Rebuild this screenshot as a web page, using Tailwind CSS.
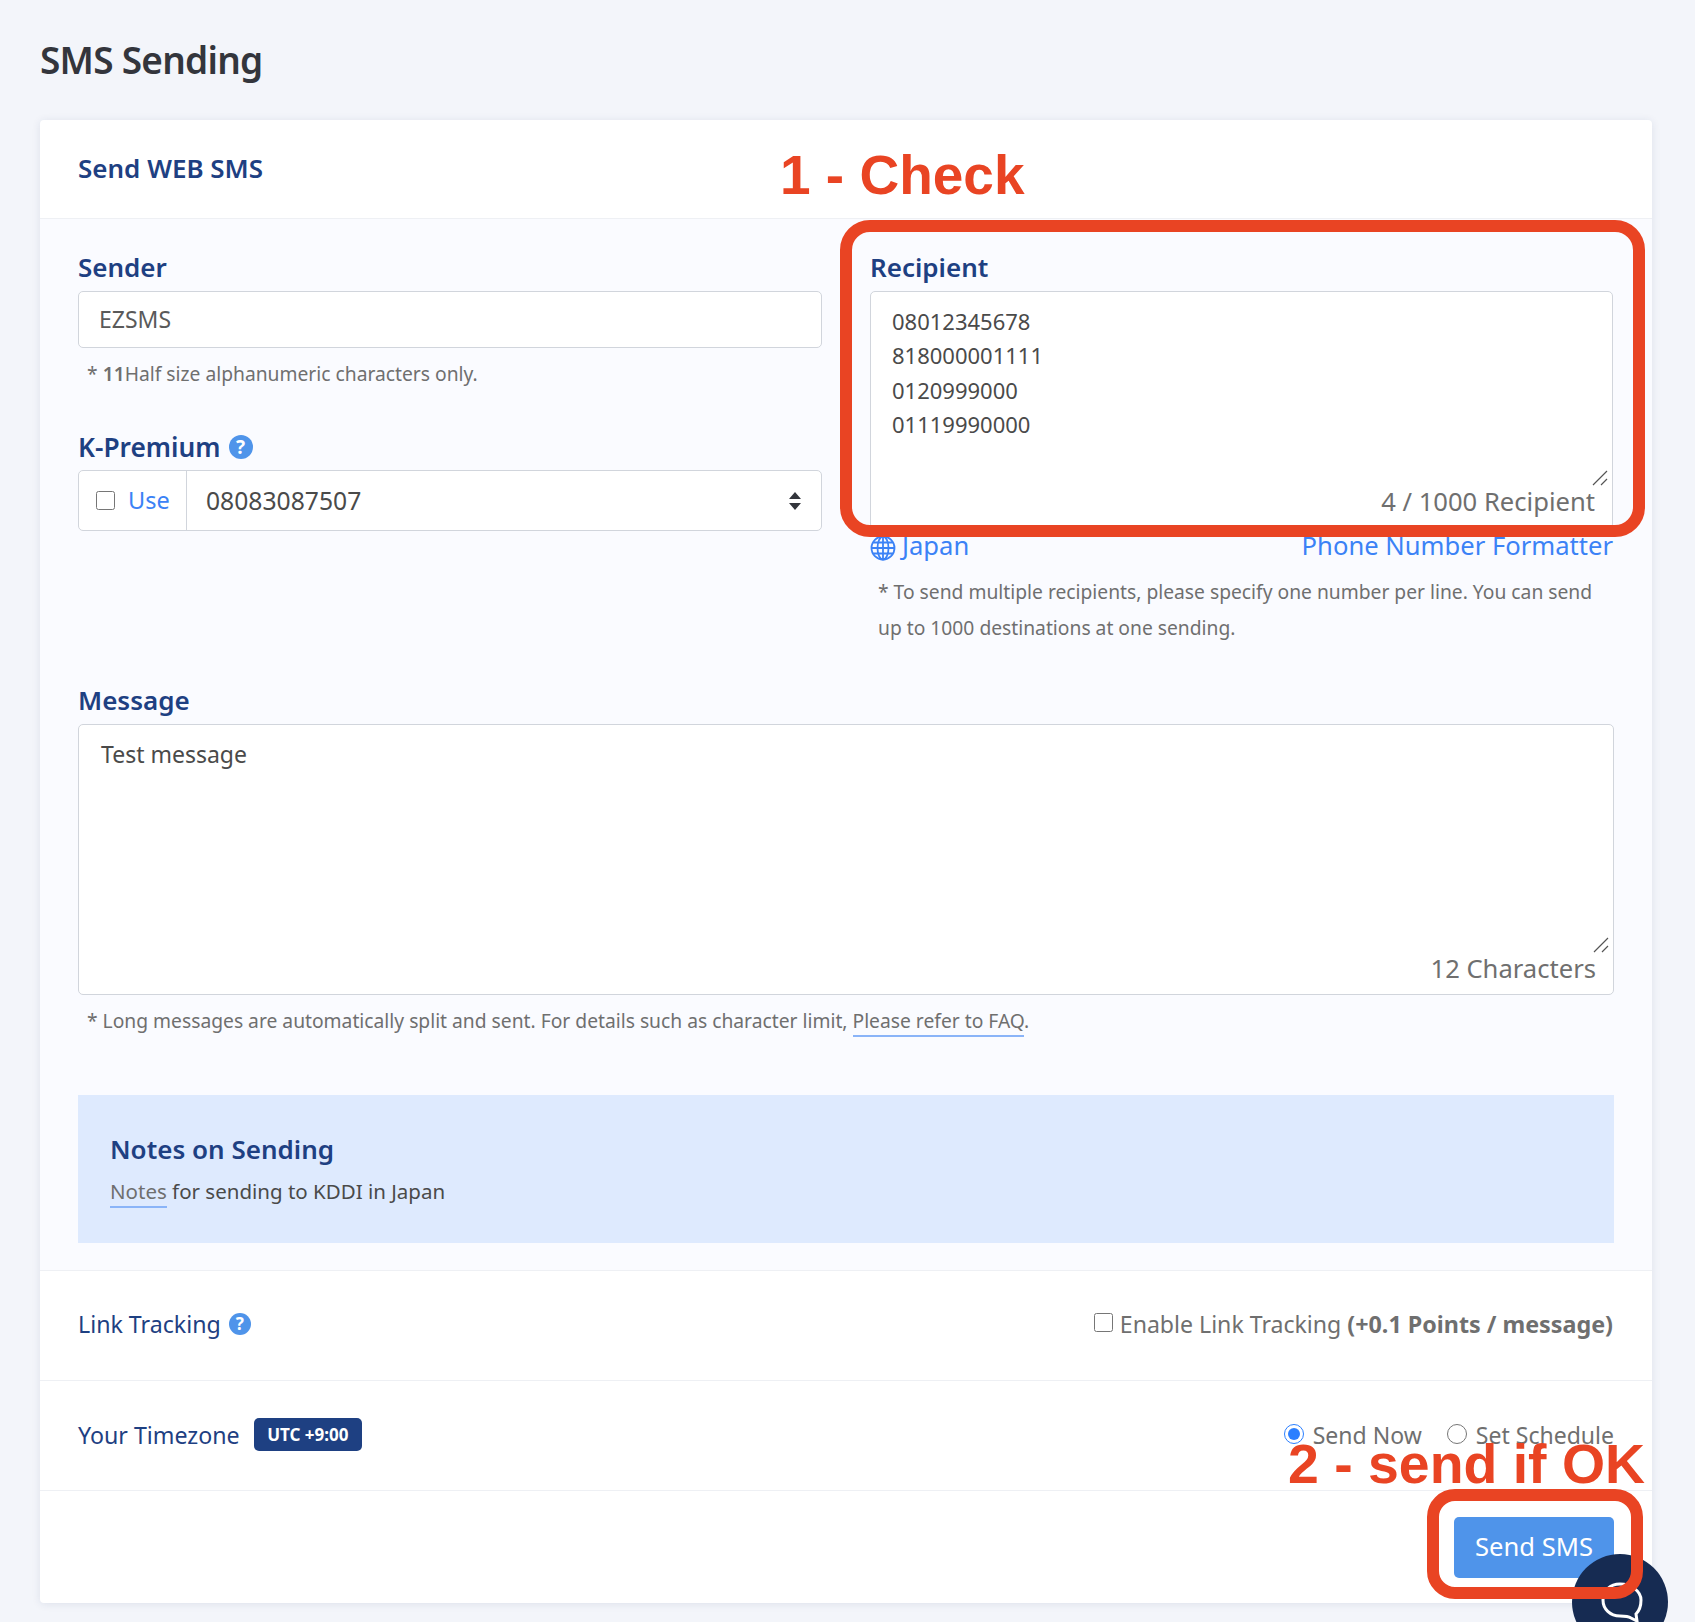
<!DOCTYPE html>
<html lang="en">
<head>
  <meta charset="UTF-8">
  <title>SMS Sending</title>
  <script src="https://cdn.jsdelivr.net/npm/@tailwindcss/browser@4"></script>
</head>
<body class="bg-[#f3f5fa] font-['Noto_Sans',sans-serif] text-[#4a4a4a]">
<div class="relative h-[1622px] overflow-hidden pl-[40px] pr-[43px]">
  <!-- Title -->
  <div class="h-[120px] flex items-center">
    <h1 class="text-[37px] font-semibold tracking-[-0.75px] text-[#33353c]">SMS Sending</h1>
  </div>

  <!-- Card -->
  <div class="bg-white rounded-[4px] shadow-[0_1px_8px_rgba(30,50,100,0.10)] h-[1483px]">
    <div class="h-[99px] px-[38px] flex items-center border-b border-[#eef0f4]">
      <h2 class="text-[26px] font-semibold text-[#1e4082] mt-[-1px]">Send WEB SMS</h2>
    </div>

    <div class="bg-[#fafbff] h-[1052px] px-[38px] border-b border-[#eef0f4]">
      <div class="grid grid-cols-[744px_743px] gap-x-[48px]">
        <!-- Left column -->
        <div class="pt-[32px]">
          <label class="block h-[33px] leading-[32px] text-[26px] font-semibold text-[#1e4082]">Sender</label>
          <div class="mt-[7px] h-[57px] flex items-center px-[20px] bg-white border border-gray-300 rounded-[5px] text-[23px] text-[#5a5a5a]">EZSMS</div>
          <p class="mt-[12px] pl-[9px] h-[28px] leading-[28px] text-[19.25px] text-[#6f6f6f]">* <b class="font-semibold">11</b>Half size alphanumeric characters only.</p>
          <div class="mt-[42px] h-[33px] flex items-center gap-[8px]">
            <label class="text-[26.3px] leading-[34px] font-semibold text-[#1e4082]">K-Premium</label>
            <span class="w-[24px] h-[24px] rounded-full bg-[#4f94ea] text-white text-[19px] leading-[24px] font-bold text-center">?</span>
          </div>
          <div class="mt-[7px] h-[61px] flex bg-white border border-gray-300 rounded-[5px]">
            <div class="w-[108px] flex items-center pl-[17px] gap-[13px] border-r border-gray-300">
              <input type="checkbox" class="w-[19px] h-[19px] m-0">
              <span class="text-[23.5px] text-[#3b82f6]">Use</span>
            </div>
            <div class="flex-1 flex items-center justify-between pl-[19px] pr-[20px] text-[24.7px]">
              <span>08083087507</span>
              <svg class="w-[12px] h-[18px]" viewBox="0 0 12 18" fill="#33353c"><path d="M6 0l6 7H0zM6 18L0 11h12z"/></svg>
            </div>
          </div>
        </div>

        <!-- Right column -->
        <div class="pt-[32px]">
          <label class="block h-[33px] leading-[32px] text-[26px] font-semibold text-[#1e4082]">Recipient</label>
          <div class="relative mt-[7px] h-[238px] pt-[12px] px-[21px] bg-white border border-gray-300 rounded-[5px] text-[22px] leading-[34.4px]">
            <div>08012345678</div>
            <div>818000001111</div>
            <div>0120999000</div>
            <div>01119990000</div>
            <svg class="absolute right-[4px] top-[178px] w-[16px] h-[16px]" viewBox="0 0 16 16" fill="none" stroke="#555" stroke-width="1.2"><path d="M1 15L15 1M9 15l6-6"/></svg>
            <span class="absolute right-[17px] top-[192px] text-[25.6px] leading-[36px] text-[#6f6f6f]">4 / 1000 Recipient</span>
          </div>
          <div class="h-[34px] flex items-center justify-between text-[25.6px] leading-[34px] text-[#3b82f6]">
            <span class="flex items-center gap-[6px]">
              <svg class="w-[26px] h-[26px] mt-[3px]" viewBox="0 0 26 26" fill="none" stroke="#3b82f6" stroke-width="1.8"><circle cx="13" cy="13" r="11.5"/><ellipse cx="13" cy="13" rx="5.5" ry="11.5"/><path d="M13 1.5v23M1.5 13h23M3.2 7.5h19.6M3.2 18.5h19.6"/></svg>
              Japan
            </span>
            <span>Phone Number Formatter</span>
          </div>
          <p class="mt-[11px] pl-[8px] pr-[10px] text-[19.25px] leading-[36px] text-[#6f6f6f]">* To send multiple recipients, please specify one number per line. You can send up to 1000 destinations at one sending.</p>
        </div>
      </div>

      <!-- Message -->
      <label class="block mt-[38px] h-[33px] leading-[32px] text-[26px] font-semibold text-[#1e4082]">Message</label>
      <div class="relative mt-[7px] h-[271px] pt-[12px] pl-[22px] pr-[21px] bg-white border border-gray-300 rounded-[5px] text-[23px] leading-[34px]">
        Test message
        <svg class="absolute right-[4px] top-[212px] w-[16px] h-[16px]" viewBox="0 0 16 16" fill="none" stroke="#555" stroke-width="1.2"><path d="M1 15L15 1M9 15l6-6"/></svg>
        <span class="absolute right-[17px] top-[226px] text-[25.6px] leading-[36px] text-[#6f6f6f]">12 Characters</span>
      </div>
      <p class="mt-[12px] pl-[9px] h-[28px] leading-[28px] text-[19.25px] text-[#6f6f6f]">* Long messages are automatically split and sent. For details such as character limit, <a class="border-b-2 border-[#8ab4f8] pb-[1px]">Please refer to FAQ</a>.</p>

      <!-- Notes -->
      <div class="mt-[60px] h-[148px] bg-[#deeafe] pl-[32px] pt-[35px]">
        <h3 class="text-[26px] leading-[38px] font-semibold text-[#1e4082]">Notes on Sending</h3>
        <p class="mt-[8px] text-[20.5px] leading-[30px]"><a class="border-b-2 border-[#8ab4f8] pb-[1px] text-[#6f6f6f]">Notes</a> for sending to KDDI in Japan</p>
      </div>
    </div>

    <!-- Link tracking -->
    <div class="h-[110px] px-[38px] flex items-center justify-between border-b border-[#eef0f4]">
      <div class="flex items-center gap-[8px] mt-[-3px]">
        <span class="text-[23.2px] text-[#1e4082]">Link Tracking</span>
        <span class="w-[22px] h-[22px] rounded-full bg-[#4f94ea] text-white text-[17px] leading-[22px] font-bold text-center">?</span>
      </div>
      <label class="flex items-center gap-[7px] text-[23.1px] text-[#6f6f6f] mt-[-3px] mr-[1px]">
        <input type="checkbox" class="w-[19px] h-[19px] m-0 mt-[-4px]">
        <span>Enable Link Tracking <b class="font-bold text-[23.3px]">(+0.1 Points / message)</b></span>
      </label>
    </div>

    <!-- Timezone -->
    <div class="h-[110px] px-[38px] flex items-center justify-between border-b border-[#eef0f4]">
      <div class="flex items-center gap-[14px]">
        <span class="text-[23.2px] text-[#1e4082]">Your Timezone</span>
        <span class="h-[33px] px-[13.5px] mt-[-2px] flex items-center rounded-[5px] bg-[#1e4082] text-white text-[17px] font-bold">UTC +9:00</span>
      </div>
      <div class="flex items-center text-[23.04px] text-[#6f6f6f]">
        <input type="radio" name="when" checked class="w-[20px] h-[20px] m-0 mt-[-3px] accent-blue-500">
        <span class="ml-[9px]">Send Now</span>
        <input type="radio" name="when" class="w-[20px] h-[20px] m-0 mt-[-3px] ml-[25px]">
        <span class="ml-[9px]">Set Schedule</span>
      </div>
    </div>

    <!-- Footer -->
    <div class="h-[112px] px-[38px] flex justify-end pt-[26px]">
      <button class="w-[160px] h-[61px] rounded-[5px] bg-[#4f94ea] text-white text-[25.6px]">Send SMS</button>
    </div>
  </div>

  <!-- Chat bubble widget -->
  <div class="absolute left-[1572px] top-[1554px] w-[96px] h-[96px] rounded-full bg-[#162b52]"></div>
  <svg class="absolute left-[1598px] top-[1580px] w-[46px] h-[42px]" viewBox="0 0 46 42" fill="none" stroke="#fff" stroke-width="3"><path d="M22 4C12 4 5 11 5 20s7 16 17 16c4 0 8 0 11 2l6 3-1-7c3-3 5-9 5-14C43 11 33 4 22 4z"/></svg>

  <!-- Annotations -->
  <div class="absolute left-[840px] top-[220px] w-[805px] h-[317px] rounded-[30px] border-[12px] border-[#e94423]"></div>
  <div class="absolute left-[1427px] top-[1489px] w-[216px] h-[110px] rounded-[28px] border-[12px] border-[#e94423]"></div>
  <div class="absolute left-[780px] top-[142px] font-['Liberation_Sans',sans-serif] font-bold text-[55px] leading-[66px] text-[#e94423]">1 - Check</div>
  <div class="absolute left-[1288px] top-[1432px] font-['Liberation_Sans',sans-serif] font-bold text-[55.4px] leading-[64px] text-[#e94423] whitespace-nowrap">2 - send if OK</div>
</div>
</body>
</html>
